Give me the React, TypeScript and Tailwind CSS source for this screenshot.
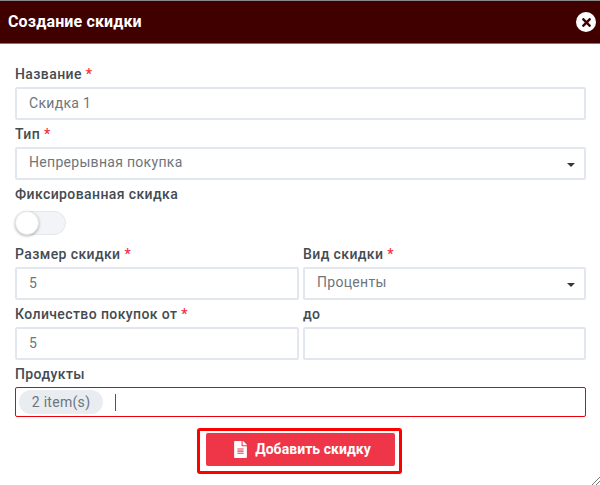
import React from "react";
import { FaFileAlt, FaTimes } from "react-icons/fa";

function Label({ text, req }: { text: string; req?: boolean }) {
  return (
    <div className="h-[27px] pt-[5px] text-[14px] leading-[18px] font-medium text-[#444b52] tracking-[0.4px]">
      {text}
      {req && <span className="text-[#f0303c]"> *</span>}
    </div>
  );
}

function Field({ value, select }: { value?: string; select?: boolean }) {
  return (
    <div className={select ? "relative h-[33px] flex items-center rounded-[2px] border-2 border-[#e1e6ef] bg-white pl-[12px] pb-[3px] text-[14px] text-[#6d757d] tracking-[0.3px]" : "relative h-[33px] flex items-center rounded-[2px] border-2 border-[#e1e6ef] bg-white pl-[12px] pb-[1px] text-[14px] text-[#6d757d] tracking-[0.3px]"}>
      {value}
      {select && (
        <span className="absolute right-[9px] top-[14px] h-0 w-0 border-x-[4px] border-t-[4px] border-x-transparent border-t-[#33383d]" />
      )}
    </div>
  );
}

export default function App() {
  return (
    <div className="relative h-[485px] w-[600px] overflow-hidden bg-white font-['Roboto',sans-serif]">
      <div className="h-[1px] bg-[#8a8a8a]" />
      <div className="flex h-[43px] items-center justify-between border-b border-[#8d6f6f] bg-[#400000] pl-[8px] pr-[4px]">
        <span className="text-[16px] font-bold text-white tracking-[0.15px]">Создание скидки</span>
        <span className="flex h-[20px] w-[20px] items-center justify-center rounded-full bg-white text-[#400000]">
          <FaTimes className="h-[13px] w-[13px]" />
        </span>
      </div>
      <div className="pl-[15px] pr-[14px] pt-[16px]">
        <Label text="Название" req />
        <Field value="Скидка 1" />
        <Label text="Тип" req />
        <Field value="Непрерывная покупка" select />
        <Label text="Фиксированная скидка" />
        <div className="mt-[4px] flex h-[24px] w-[51px] items-center rounded-full border border-[#e4e7ec] bg-[#f3f4f7]">
          <span className="-ml-px h-[24px] w-[24px] rounded-full border border-[#e8e8e8] bg-white shadow-[0_1px_3px_rgba(0,0,0,0.3)]" />
        </div>
        <div className="mt-[5px] grid grid-cols-[284px_283px] gap-x-[4px]">
          <div>
            <Label text="Размер скидки" req />
            <Field value="5" />
          </div>
          <div>
            <Label text="Вид скидки" req />
            <Field value="Проценты" select />
          </div>
          <div>
            <Label text="Количество покупок от" req />
            <Field value="5" />
          </div>
          <div>
            <Label text="до" />
            <Field />
          </div>
        </div>
        <Label text="Продукты" />
        <div className="flex h-[30px] items-center rounded-[2px] border border-[#e8000a] bg-white pl-[3px] text-[14px] text-[#6d757d]">
          <span className="flex h-[24px] w-[84px] items-center justify-center rounded-full bg-[#e9ecf0] tracking-[0.3px]">
            2 item(s)
          </span>
          <span className="ml-[12px] h-[17px] w-[1px] bg-[#555]" />
        </div>
        <div className="mt-[11px] flex justify-center pr-[2px]">
          <div className="rounded-[3px] border-[3px] border-[#ff0000] bg-white pt-[2px] pb-[5px] pl-[6px] pr-[4px]">
            <button className="flex h-[33px] w-[189px] items-center justify-center gap-[8px] rounded-[2px] bg-[#ee3648] pl-[4px] text-[14px] font-bold text-white tracking-[0.05px]">
              <FaFileAlt className="h-[17px] w-[13px]" />
              Добавить скидку
            </button>
          </div>
        </div>
      </div>
      <svg className="absolute bottom-0 right-0" width="9" height="9" viewBox="0 0 9 9">
        <path d="M1 9 L9 1 M5 9 L9 5" stroke="#777" strokeWidth="1" />
      </svg>
    </div>
  );
}
